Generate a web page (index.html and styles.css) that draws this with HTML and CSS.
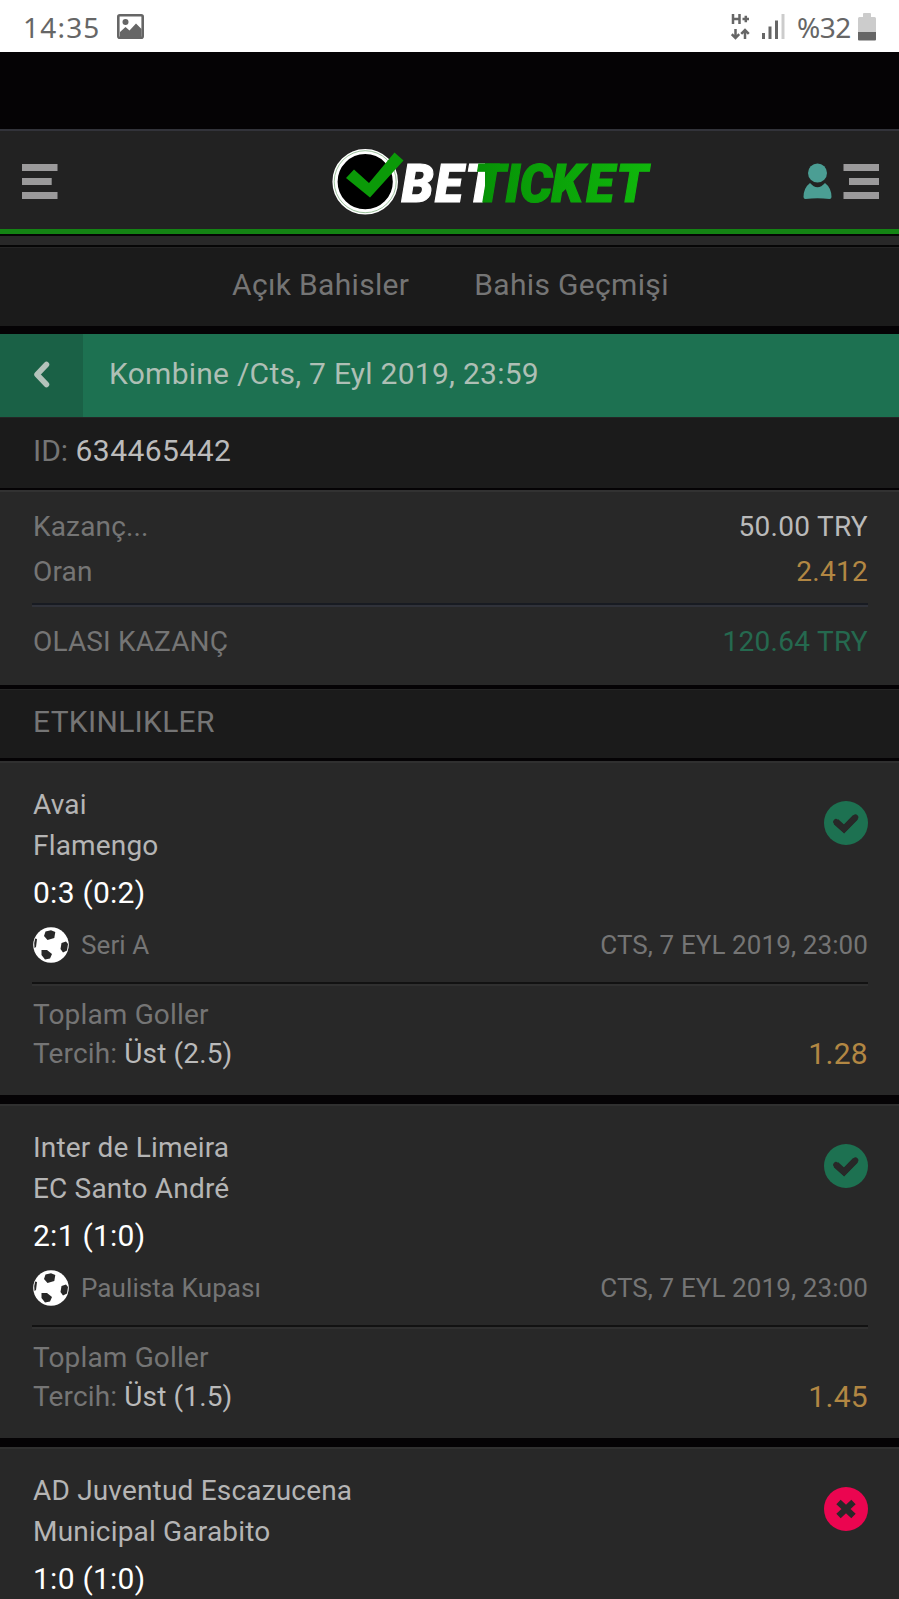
FILE: index.html
```html
<!DOCTYPE html>
<html lang="tr">
<head>
<meta charset="utf-8">
<title>Betticket</title>
<link rel="stylesheet" href="styles.css">
</head>
<body>
<svg class="defs" width="0" height="0">
  <symbol id="ball" viewBox="0 0 36 36">
    <circle cx="18" cy="18" r="17.8" fill="#fff"/>
    <path d="M12.500 4.500L18 3.200L22.300 5L21.300 11L14.500 13L11 9Z M28.500 16L33 14.500L35 17L34 23.500L30 25.500L27.500 22Z M8.500 23L14 23L19 27L17 31.500L12 32.500L8.500 28Z M2.200 11.500L4 12L3 20L1.500 21Q.8 15 2.200 11.500Z" fill="#282828"/>
  </symbol>
  <symbol id="won" viewBox="0 0 44 44">
    <circle cx="22" cy="22" r="22" fill="#1d7151"/>
    <path d="M12 20.800L20 28L31.500 16.200" fill="none" stroke="#282828" stroke-width="6.600"/>
    <path d="M12 20.800L20 28L31.500 16.200" fill="none" stroke="#282828" stroke-width="5.600" stroke-linecap="round"/>
  </symbol>
  <symbol id="lost" viewBox="0 0 44 44">
    <circle cx="22" cy="22" r="22" fill="#eb0550"/>
    <path d="M14.500 15L29.500 29M29.500 15L14.500 29" stroke="#282828" stroke-width="6.400"/>
  </symbol>
</svg>

<div class="status">
  <span class="clock">14:35</span>
  <svg class="photo" width="27" height="25" viewBox="0 0 27 25"><rect x="1.300" y="1.300" width="24.400" height="22.400" rx="1.500" fill="#fff" stroke="#666" stroke-width="2.600"/><circle cx="8.500" cy="8" r="3" fill="#666"/><path d="M3 18L8.500 13L12.500 16.500L19 9.500L24.500 15V24H3Z" fill="#666"/></svg>
  <span class="push"></span>
  <svg class="net" width="19" height="27" viewBox="0 0 19 27"><path d="M2 1V11M2 6H8.500M8.500 1V11M11.500 6H18M14.800 2.800V9.200M4.500 16V25M.8 21.200L4.500 25L8.200 21.200M14 26V17M10.200 20.800L14 17L17.800 20.800" fill="none" stroke="#666" stroke-width="2.500"/></svg>
  <svg class="signal" width="23" height="25" viewBox="0 0 23 25"><path d="M0 19h3v6H0zM6.500 12.500h3V25h-3zM13 6.500h3V25h-3z" fill="#666"/><path d="M19.500 0h3v25h-3z" fill="#ccc"/></svg>
  <span class="percent">%32</span>
  <svg class="battery" width="18" height="28" viewBox="0 0 18 28"><path d="M5 1Q5 0 6 0H12Q13 0 13 1V4H16.500Q18 4 18 5.500V20H0V5.500Q0 4 1.500 4H5Z" fill="#ccc"/><path d="M0 19H18V26.500Q18 27.500 17 27.500H1Q0 27.500 0 26.500Z" fill="#666"/></svg>
</div>

<header class="header">
  <svg width="36" height="36" viewBox="0 0 36 36"><path d="M0 0h35.500v7H0zM0 14h29.700v7H0zM0 28h35.500v7H0z" fill="#9b9a9b"/></svg>
  <svg class="logo" width="320" height="70" viewBox="0 0 320 70">
    <defs>
      <linearGradient id="ticket" gradientUnits="userSpaceOnUse" x1="72" x2="260" y1="0" y2="0"><stop offset="0" stop-color="#069006"/><stop offset="1" stop-color="#10b80c"/></linearGradient>
      <linearGradient id="bet" gradientUnits="userSpaceOnUse" x1="0" x2="100" y1="0" y2="0"><stop offset=".87" stop-color="#fff"/><stop offset=".87" stop-color="#069006"/></linearGradient>
    </defs>
    <circle cx="33.200" cy="33.700" r="30.200" fill="#000" stroke="#fff" stroke-width="5.200"/>
    <circle cx="33.200" cy="33.700" r="31" fill="none" stroke="#5c9a5c" stroke-width=".6"/>
    <path d="M14 30L22 21.500L37 35L62.500 4.500L71.500 12.500L38 49.500Z" fill="#0b9a08"/>
    <text class="wordmark" transform="translate(69 54) scale(.97 1)" x="0.500 35 66 75.500 107.500 122.500 155 191 222"><tspan fill="url(#bet)" stroke="url(#bet)">BET</tspan><tspan fill="url(#ticket)" stroke="url(#ticket)">TICKET</tspan></text>
  </svg>
  <svg class="account" width="77" height="37" viewBox="0 0 77 37"><circle cx="14.500" cy="10" r="9.500" fill="#4b9e94"/><path d="M7 20Q14.500 28.500 22 20Q28.500 25 28.500 34Q28.500 36 26.500 36Q14.500 34.500 2.500 36Q.5 36 .5 34Q.5 25 7 20Z" fill="#4b9e94"/><path d="M40.500 1H76V8H40.500zM46 15H76V22H46zM40.500 29H76V36H40.500z" fill="#9b9a9b"/></svg>
</header>
<div class="strip"></div>

<nav class="tabs"><span class="tab-open">Açık Bahisler</span><span class="tab-history">Bahis Geçmişi</span></nav>

<div class="title">
  <span class="back"><svg width="17" height="27" viewBox="0 0 17 27"><path d="M13.500 3.500L4 13.500L13.500 23.500" fill="none" stroke="#b4c3bb" stroke-width="5.500" stroke-linecap="round" stroke-linejoin="round"/></svg></span>
  <span class="title-text">Kombine /Cts, 7 Eyl 2019, 23:59</span>
</div>
<div class="bar bar-id"><span>ID: <b class="id">634465442</b></span></div>

<section class="summary">
  <div class="row stake"><span>Kazanç...</span><span class="light">50.00 TRY</span></div>
  <div class="row odds"><span>Oran</span><span class="gold">2.412</span></div>
  <div class="rule"></div>
  <div class="row payout"><span>OLASI KAZANÇ</span><span class="green">120.64 TRY</span></div>
</section>
<div class="bar bar-events">ETKINLIKLER</div>

<article class="event">
  <svg class="result" width="44" height="44"><use href="#won"/></svg>
  <div class="team">Avai</div><div class="team">Flamengo</div>
  <div class="score">0:3 (0:2)</div>
  <div class="league"><svg width="36" height="36"><use href="#ball"/></svg><span>Seri A</span><span class="date">CTS, 7 EYL 2019, 23:00</span></div>
  <div class="rule"></div>
  <div class="bet"><div class="pick"><div>Toplam Goller</div><div>Tercih: <span class="light">Üst (2.5)</span></div></div><span class="price">1.28</span></div>
</article>
<article class="event">
  <svg class="result" width="44" height="44"><use href="#won"/></svg>
  <div class="team">Inter de Limeira</div><div class="team">EC Santo André</div>
  <div class="score">2:1 (1:0)</div>
  <div class="league"><svg width="36" height="36"><use href="#ball"/></svg><span>Paulista Kupası</span><span class="date">CTS, 7 EYL 2019, 23:00</span></div>
  <div class="rule"></div>
  <div class="bet"><div class="pick"><div>Toplam Goller</div><div>Tercih: <span class="light">Üst (1.5)</span></div></div><span class="price">1.45</span></div>
</article>
<article class="event event-last">
  <svg class="result" width="44" height="44"><use href="#lost"/></svg>
  <div class="team">AD Juventud Escazucena</div><div class="team">Municipal Garabito</div>
  <div class="score">1:0 (1:0)</div>
</article>
</body>
</html>
```
FILE: styles.css
```css
* { box-sizing: border-box; }
html, body { height: 1599px; overflow: hidden; }
body { margin: 0; background: #050305; font-family: Roboto, sans-serif; color: #757575; display: flex; flex-direction: column; }
body > * { flex: none; }
svg { display: block; flex: none; }
.defs { position: absolute; }

.status { height: 52px; background: #fff; display: flex; align-items: flex-start; padding: 0 23px 0 23px; color: #666; font-family: "Noto Sans", sans-serif; font-size: 28px; line-height: 55px; }
.clock { width: 94px; letter-spacing: 1.2px; }
.photo { margin-top: 14px; }
.push { flex: 1; }
.net { margin: 13px 12px 0 0; }
.signal { margin: 14px 12px 0 0; }
.percent { width: 61px; letter-spacing: -.5px; white-space: nowrap; }
.battery { margin-top: 13px; }

.header { margin-top: 77px; height: 105px; background: #222; border-top: 2px solid #32333a; border-bottom: 5px solid #148414; display: flex; padding: 33px 0 0 21.500px; }
.logo { margin: -16px 0 0 274px; }
.account { margin: -1px 0 0 151px; }
.wordmark { font: italic 900 53px Roboto, sans-serif; stroke-width: 1.2px; }
.strip { height: 13px; background: #282828; border-top: 2px solid #060606; border-bottom: 2px solid #060606; }
.tabs { height: 79px; background: #1b1b1b; border-top: 1px solid #252525; padding-left: 232px; display: flex; gap: 65px; font-size: 30px; line-height: 73px; }
.tab-open, .tab-history { letter-spacing: .33px; }
.title { margin-top: 8px; height: 83px; background: #1d7151; display: flex; }
.back { width: 83px; background: #1a6146; padding: 27px 0 0 33px; }
.title-text { padding-left: 26px; font-size: 30px; line-height: 80px; color: #aebfb5; letter-spacing: .26px; }
.bar { background: #1b1b1b; padding-left: 33px; font-size: 30px; border-top: 1px solid #252525; }
.bar-id { height: 71px; line-height: 66px; }
.id { font-weight: 400; color: #bbb; letter-spacing: .45px; }
.summary { margin-top: 2px; height: 195px; background: #282828; border-top: 2px solid #323232; padding: 13px 31px 0 33px; font-size: 28px; letter-spacing: .3px; }
.row { display: flex; justify-content: space-between; }
.row > :first-child { letter-spacing: .15px; }
.stake { line-height: 44px; }
.odds { line-height: 46px; }
.light { color: #bababa; }
.gold, .price { color: #b28743; }
.green { color: #25694f; }
.rule { height: 4px; border-top: 2px solid #121212; border-bottom: 2px solid #303030; }
.summary .rule { margin: 8px 0 0 -1px; border-top-color: #181b22; border-bottom-color: #30323a; }
.payout { line-height: 70px; }
.bar-events { margin-top: 4px; height: 69px; line-height: 64px; letter-spacing: .3px; }
.event { position: relative; height: 334px; background: #282828; border-top: 2px solid #303030; padding: 21px 31px 0 33px; margin-bottom: 9px; }
.bar-events + .event { margin-top: 3px; }
.event-last { height: 152px; margin-bottom: 0; }
.result { position: absolute; right: 31px; top: 38px; }
.team { font-size: 28px; line-height: 41px; color: #b5b5b5; letter-spacing: .18px; }
.score { font-size: 30px; line-height: 53px; color: #fff; letter-spacing: .25px; }
.league { height: 49px; display: flex; align-items: center; font-size: 26px; margin-left: -.5px; letter-spacing: .08px; padding-top: 2px; }
.league span { padding-left: 12.500px; }
.league .date { margin-left: auto; letter-spacing: .1px; }
.event .rule { margin: 14px 0 0 -1px; }
.bet { display: flex; justify-content: space-between; }
.pick { padding-top: 9px; font-size: 28px; line-height: 39px; letter-spacing: .15px; }
.price { font-size: 30px; line-height: 39px; padding-top: 48px; letter-spacing: .3px; }
```
